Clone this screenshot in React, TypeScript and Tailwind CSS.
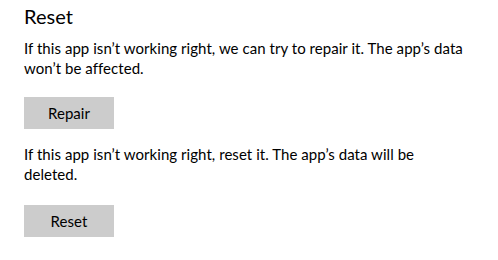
export default function App() {
  return (
    <div className="min-h-screen w-full bg-white pl-6 pt-[2px] text-black font-['Lato','Open_Sans',sans-serif]">
      <div className="w-[444px] tracking-[0.05px]">
        <h2 className="text-[20px] leading-[28px]">Reset</h2>
        <p className="mt-[8px] text-[15px] leading-[20px]">
          If this app isn’t working right, we can try to repair it. The app’s data won’t be affected.
        </p>
        <button className="mt-[19px] h-8 w-[90px] bg-[#cccccc] text-[15px] leading-[20px] text-black">
          Repair
        </button>
        <p className="mt-[15px] text-[15px] leading-[20px]">
          If this app isn’t working right, reset it. The app’s data will be deleted.
        </p>
        <button className="mt-[21px] h-8 w-[90px] bg-[#cccccc] text-[15px] leading-[20px] text-black">
          Reset
        </button>
      </div>
    </div>
  );
}
